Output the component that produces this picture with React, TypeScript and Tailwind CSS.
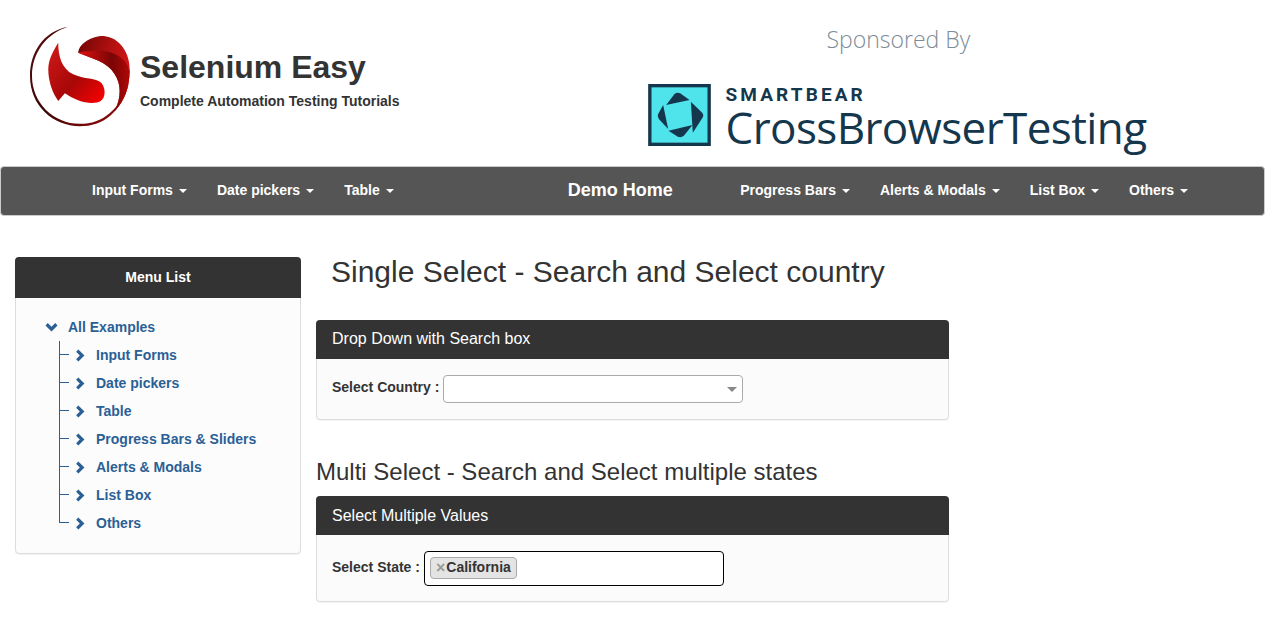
const sans = { fontFamily: '"Liberation Sans", Arial, sans-serif' };

const leftNav = ["Input Forms", "Date pickers", "Table"];
const rightNav = ["Progress Bars", "Alerts & Modals", "List Box", "Others"];
const treeItems = ["Input Forms", "Date pickers", "Table", "Progress Bars & Sliders", "Alerts & Modals", "List Box", "Others"];

function SeleniumLogo() {
  return (
    <svg viewBox="30 20 310 306" className="h-[102px] w-[103px] shrink-0">
      <defs>
        <linearGradient id="ring" x1="0" y1="0" x2="1" y2="1">
          <stop offset="0" stopColor="#5a1010" />
          <stop offset="0.5" stopColor="#3c0505" />
          <stop offset="1" stopColor="#a50a0a" />
        </linearGradient>
        <linearGradient id="lobe" x1="0" y1="0" x2="1" y2="0.5">
          <stop offset="0" stopColor="#6e0505" />
          <stop offset="0.55" stopColor="#b01010" />
          <stop offset="1" stopColor="#d81818" />
        </linearGradient>
        <linearGradient id="tail" x1="0" y1="0" x2="1" y2="1">
          <stop offset="0" stopColor="#d21a1a" />
          <stop offset="0.55" stopColor="#a80808" />
          <stop offset="1" stopColor="#ff0000" />
        </linearGradient>
        <linearGradient id="fold" x1="0" y1="0" x2="1" y2="0">
          <stop offset="0" stopColor="#e01010" />
          <stop offset="0.65" stopColor="#7a0505" />
          <stop offset="1" stopColor="#b00808" />
        </linearGradient>
      </defs>
      <path
        d="M145 22C70 35 30 100 30 170C30 260 100 321 180 321C250 321 305 280 328 190C300 270 250 314 180 314C100 314 36 250 36 170C36 100 80 42 145 22Z"
        fill="url(#ring)"
      />
      <path d="M175 100C178 70 220 48 255 50C300 55 332 100 330 155C329 205 315 245 285 275C305 235 305 195 285 165C262 125 215 118 175 100Z" fill="url(#lobe)" />
      <path d="M175 100C215 118 262 125 285 165C305 195 305 235 285 275C315 245 329 205 330 155C320 120 290 98 250 95C220 93 195 95 175 100Z" fill="url(#fold)" />
      <path d="M115 70C100 95 85 120 85 150C85 190 100 225 115 245L135 222C165 242 200 256 232 250C258 245 260 212 246 192C232 176 190 180 160 165C125 148 115 110 115 70Z" fill="url(#tail)" />
    </svg>
  );
}

function BearLogo() {
  return (
    <svg viewBox="24 20 188 186" className="h-[62px] w-[63px] shrink-0">
      <rect x="29" y="25" width="178" height="176" fill="#4fe3eb" stroke="#15374d" strokeWidth="10" />
      <g fill="#15374d">
        <path d="M78 83L103 50Q111 43 120 48L148 68Z" />
        <path d="M152 73L186 106Q192 113 187 121L158 166Z" />
        <path d="M85 160L157 143L131 175Q123 182 113 178Z" />
        <path d="M69 83L84 155L56 125Q50 117 54 110Z" />
      </g>
    </svg>
  );
}

function Caret() {
  return <span className="ml-[6px] inline-block h-0 w-0 border-x-4 border-t-4 border-x-transparent border-t-white" />;
}

function NavItem({ label }: { label: string }) {
  return (
    <a className="flex items-center px-[15px] pb-px text-[14px] font-bold text-white">
      {label}
      <Caret />
    </a>
  );
}

function Chevron({ down }: { down?: boolean }) {
  return (
    <svg viewBox="0 0 12 12" className="h-[13px] w-[13px] shrink-0">
      <polyline
        points={down ? "1.5,3 6,7.5 10.5,3" : "3,1.5 7.5,6 3,10.5"}
        fill="none"
        stroke="#2a6095"
        strokeWidth="3"
      />
    </svg>
  );
}

function Panel({ title, titleClass, children }: { title: string; titleClass: string; children: React.ReactNode }) {
  return (
    <section className="rounded-[4px] border border-[#ddd] bg-[#fbfbfb] shadow-[0_1px_1px_rgba(0,0,0,0.05)]">
      <div className={`-mx-px -mt-px flex h-[39px] items-center rounded-t-[4px] bg-[#333] px-4 text-[16px] text-white ${titleClass}`}>
        {title}
      </div>
      {children}
    </section>
  );
}

export default function App() {
  return (
    <div className="h-[635px] w-[1280px] overflow-hidden bg-white text-[#333]" style={sans}>
      <header className="flex h-[166px]">
        <div className="ml-[30px] mt-[26px] flex items-start">
          <SeleniumLogo />
          <div className="ml-[7px] mt-[20px]">
            <h1 className="text-[32px] font-bold leading-[42px] text-[#333]">Selenium Easy</h1>
            <p className="mt-[3px] text-[14px] font-bold leading-[20px] text-[#333]">Complete Automation Testing Tutorials</p>
          </div>
        </div>
        <div className="ml-[248px] flex flex-col">
          <p
            className="ml-[179px] mt-[23px] text-[23px] font-light leading-[33px] text-[#7d8b99]"
            style={{ fontFamily: '"Open Sans", sans-serif' }}
          >
            Sponsored By
          </p>
          <div className="mt-[28px] flex items-start">
            <BearLogo />
            <div className="ml-[15px] text-[#15374d]">
              <p className="mt-[3px] text-[19px] font-bold leading-[16px] tracking-[3.1px]" style={{ fontFamily: "Roboto, sans-serif" }}>
                SMARTBEAR
              </p>
              <p className="text-[44px] leading-[48px] tracking-[-0.6px]" style={{ fontFamily: '"Open Sans", sans-serif' }}>
                CrossBrowserTesting
              </p>
            </div>
          </div>
        </div>
      </header>

      <nav className="flex h-[50px] w-[1265px] rounded-[4px] border border-[#ccc] bg-[#555] pl-[76px]">
        {leftNav.map((item) => (
          <NavItem key={item} label={item} />
        ))}
        <a className="ml-[159px] flex items-center pb-px text-[18px] font-bold text-white">Demo Home</a>
        <div className="ml-[52.5px] flex">
          {rightNav.map((item) => (
            <NavItem key={item} label={item} />
          ))}
        </div>
      </nav>

      <main className="ml-[15px] mt-[41px] flex items-start gap-[15px]">
        <aside className="h-[297px] w-[286px] rounded-[4px] border border-[#ddd] bg-[#fcfcfc] shadow-[0_1px_1px_rgba(0,0,0,0.05)]">
          <div className="-mx-px -mt-px flex h-[41px] items-center justify-center rounded-t-[4px] bg-[#333] text-[14px] font-bold text-white">
            Menu List
          </div>
          <div className="pl-[29px] pt-[15px] text-[14px] font-bold text-[#2a6095]">
            <div className="flex h-7 items-center gap-[10px]">
              <Chevron down />
              <span>All Examples</span>
            </div>
            <ul className="pl-[14px]">
              {treeItems.map((item, i) => (
                <li key={item} className="flex h-7 items-center">
                  <div className="h-7 w-[10px] shrink-0">
                    <div className="h-[14px] border-b border-l border-[#2a6095]" />
                    {i < treeItems.length - 1 && <div className="h-[14px] border-l border-[#2a6095]" />}
                  </div>
                  <span className="ml-[5px] mr-[9px]">
                    <Chevron />
                  </span>
                  <span>{item}</span>
                </li>
              ))}
            </ul>
          </div>
        </aside>

        <div className="w-[633px]">
          <h2 className="-mt-[2px] pl-[15px] text-[30px] leading-[33px] text-[#333]">Single Select - Search and Select country</h2>
          <div className="mt-[32px]">
            <Panel title="Drop Down with Search box" titleClass="pb-px">
              <div className="flex h-[60px] items-start pl-[15px] pt-[16px]">
                <label className="text-[14px] font-bold leading-[25px]">Select Country :</label>
                <div className="ml-[4px] flex h-[28px] w-[300px] items-center justify-end rounded-[4px] border border-[#aaa] bg-white pr-[5px]">
                  <span className="h-0 w-0 border-x-[5px] border-t-[5px] border-x-transparent border-t-[#888]" />
                </div>
              </div>
            </Panel>
          </div>
          <h3 className="mt-[39px] text-[24px] leading-[26px] text-[#333]">Multi Select - Search and Select multiple states</h3>
          <div className="mt-[11px]">
            <Panel title="Select Multiple Values" titleClass="pt-px">
              <div className="flex h-[66px] items-start pl-[15px] pt-[16px]">
                <label className="pt-[4px] text-[14px] font-bold leading-[25px]">Select State :</label>
                <div className="ml-[4px] flex h-[35px] w-[300px] items-start rounded-[4px] border border-black bg-white pl-[5px] pt-[5px]">
                  <span className="flex h-[22px] items-center rounded-[4px] border border-[#aaa] bg-[#e4e4e4] pl-[5px] pr-[5px] text-[14px] font-bold leading-[16px]">
                    <span className="mr-[1px] text-[16px] text-[#999]">×</span>
                    <span className="-mt-[3px]">California</span>
                  </span>
                </div>
              </div>
            </Panel>
          </div>
        </div>
      </main>
    </div>
  );
}
